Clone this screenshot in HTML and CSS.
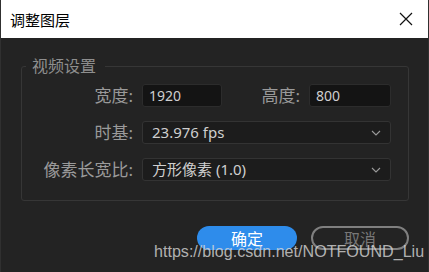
FILE: index.html
```html
<!DOCTYPE html>
<html lang="zh-CN">
<head>
  <meta charset="UTF-8" />
  <title>调整图层</title>
  <link rel="stylesheet" href="styles.css">
</head>
<body>
  <div class="window">
    <div class="titlebar">
      <span class="title">调整图层</span>
      <svg class="close" width="14" height="14" viewBox="0 0 14 14">
        <path d="M1 1 L13 13 M13 1 L1 13" stroke="#111" stroke-width="1.2" fill="none"/>
      </svg>
    </div>

    <div class="content">
      <fieldset class="group">
        <legend>视频设置</legend>
        <div class="form">
          <label>宽度:</label>
          <div class="input">1920</div>
          <label>高度:</label>
          <div class="input">800</div>

          <label>时基:</label>
          <div class="select wide">
            <span>23.976 fps</span>
            <svg width="10" height="6" viewBox="0 0 10 6"><path d="M1 1 L5 5 L9 1" stroke="#9a9a9a" stroke-width="1.1" fill="none"/></svg>
          </div>

          <label>像素长宽比:</label>
          <div class="select wide">
            <span>方形像素 (1.0)</span>
            <svg width="10" height="6" viewBox="0 0 10 6"><path d="M1 1 L5 5 L9 1" stroke="#9a9a9a" stroke-width="1.1" fill="none"/></svg>
          </div>
        </div>
      </fieldset>

      <div class="buttons">
        <button class="btn primary">确定</button>
        <button class="btn outline">取消</button>
      </div>
    </div>

    <div class="watermark">https://blog.csdn.net/NOTFOUND_Liu</div>
  </div>
</body>
</html>
```

FILE: styles.css
```css
body {
  margin: 0;
  padding: 0;
  background: #232323;
  font-family: "Noto Sans", "Noto Sans CJK SC", sans-serif;
}
.window {
  position: relative;
  width: 427px;
  height: 272px;
  background: #232323;
  border-left: 1px solid #303030;
  border-right: 1px solid #303030;
  overflow: hidden;
}
.titlebar {
  height: 38px;
  background: #fff;
  display: flex;
  align-items: center;
  justify-content: space-between;
  padding: 0 15px 0 9px;
}
.title {
  font-size: 15px;
  color: #000;
}
.content {
  padding: 19px 19px 0 20px;
}
.group {
  margin: 0;
  padding: 9px 17px 19px 0;
  border: 1px solid #363636;
  border-radius: 3px;
}
.group legend {
  margin-left: 4px;
  padding: 0 9px 0 6px;
  font-size: 16px;
  line-height: 18px;
  color: #8e8e8e;
}
.form {
  display: grid;
  grid-template-columns: 111px 80px 69px 82px;
  column-gap: 9px;
  row-gap: 14px;
  align-items: center;
}
.form label {
  text-align: right;
  font-size: 17px;
  line-height: 20px;
  color: #9a9a9a;
  white-space: nowrap;
}
.input, .select {
  height: 21px;
  border: 1px solid #2c2c2c;
  border-radius: 3px;
  background: #141414;
  color: #cfcfcf;
  font-size: 14px;
  line-height: 21px;
  padding: 0 6px;
}
.select {
  background: #1c1c1c;
  border-color: #333;
  display: flex;
  align-items: center;
  justify-content: space-between;
  padding: 0 8px 0 9px;
  font-size: 15px;
}
.select svg {
  margin-right: 1px;
}
.wide {
  grid-column: 2 / 5;
}
.buttons {
  display: flex;
  justify-content: flex-end;
  gap: 14px;
  margin-top: 25px;
}
.btn {
  height: 24px;
  border-radius: 12px;
  font-family: "Noto Sans CJK SC", sans-serif;
  font-size: 16px;
  line-height: 20px;
  padding: 0;
}
.primary {
  width: 100px;
  background: #2e8ceb;
  color: #fff;
  border: none;
}
.outline {
  width: 98px;
  background: transparent;
  color: #777;
  border: 2px solid #7f7f7f;
}
.watermark {
  position: absolute;
  left: 153px;
  top: 242px;
  font-family: "Liberation Sans", Arial, sans-serif;
  font-size: 16.1px;
  color: rgba(215, 215, 215, 0.8);
  white-space: nowrap;
}
```
